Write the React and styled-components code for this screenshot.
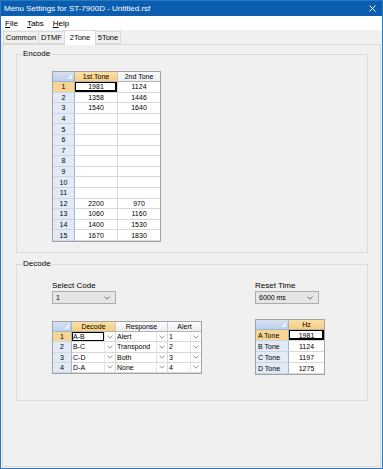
import React from 'react';
import styled, { createGlobalStyle, css } from 'styled-components';

const encodeRows = [
  ['1981', '1124'],
  ['1358', '1446'],
  ['1540', '1640'],
  ['', ''],
  ['', ''],
  ['', ''],
  ['', ''],
  ['', ''],
  ['', ''],
  ['', ''],
  ['', ''],
  ['2200', '970'],
  ['1060', '1160'],
  ['1400', '1530'],
  ['1670', '1830'],
];

const decodeRows = [
  ['A-B', 'Alert', '1'],
  ['B-C', 'Transpond', '2'],
  ['C-D', 'Both', '3'],
  ['D-A', 'None', '4'],
];

const hzRows = [
  ['A Tone', '1981'],
  ['B Tone', '1124'],
  ['C Tone', '1197'],
  ['D Tone', '1275'],
];

const GlobalStyle = createGlobalStyle`
  html, body {
    margin: 0;
    padding: 0;
    background: #fff;
  }
  body {
    font-family: "Liberation Sans", Arial, sans-serif;
    color: #000;
  }
`;

const Chevron = ({ color = '#606060' }) => (
  <svg width="6" height="4" viewBox="0 0 6 4">
    <polyline points="0.5,0.6 3,3.2 5.5,0.6" fill="none" stroke={color} strokeWidth="0.9" />
  </svg>
);

const App = () => {
  return (
    <>
      <GlobalStyle />
      <Window>
        <TitleBar>
          <span>Menu Settings for ST-7900D - Untitled.rsf</span>
          <svg width="7" height="7" viewBox="0 0 7 7">
            <path d="M0.5 0.5 L6.5 6.5 M6.5 0.5 L0.5 6.5" stroke="#fff" strokeWidth="1" />
          </svg>
        </TitleBar>
        <MenuBar>
          <MenuItem><u>F</u>ile</MenuItem>
          <MenuItem><u>T</u>abs</MenuItem>
          <MenuItem><u>H</u>elp</MenuItem>
        </MenuBar>
        <TabStrip>
          <Tab $w={36}>Common</Tab>
          <Tab $w={27}>DTMF</Tab>
          <Tab $w={32} $active>2Tone</Tab>
          <Tab $w={26}>5Tone</Tab>
        </TabStrip>
        <Panel>
          <Group>
            <Legend>Encode</Legend>
            <GroupBody $h={193}>
              <DataGrid $cols="22px 43px 42px" $rows="10px repeat(15, 10.6px)">
                <Corner />
                <ColHeader $selected>1st Tone</ColHeader>
                <ColHeader $last>2nd Tone</ColHeader>
                {encodeRows.map((row, i) => (
                  <React.Fragment key={i}>
                    <RowHeader $selected={i === 0}>{i + 1}</RowHeader>
                    <Cell $focus={i === 0}>{row[0]}</Cell>
                    <Cell $last>{row[1]}</Cell>
                  </React.Fragment>
                ))}
              </DataGrid>
            </GroupBody>
          </Group>

          <Group>
            <Legend>Decode</Legend>
            <GroupBody $h={131}>
              <DecodeLayout>
                <LeftColumn>
                  <FieldLabel>Select Code</FieldLabel>
                  <Dropdown>
                    <span>1</span>
                    <Chevron />
                  </Dropdown>
                  <DataGrid $top={17} $cols="19px 44px 52px 33px" $rows="10px repeat(4, 10.25px)">
                    <Corner />
                    <ColHeader $selected>Decode</ColHeader>
                    <ColHeader>Response</ColHeader>
                    <ColHeader $last>Alert</ColHeader>
                    {decodeRows.map((row, i) => (
                      <React.Fragment key={i}>
                        <RowHeader $selected={i === 0}>{i + 1}</RowHeader>
                        {row.map((value, j) => (
                          <ComboCell key={j} $last={j === row.length - 1}>
                            <ComboText $focus={i === 0 && j === 0}>{value}</ComboText>
                            <ComboButton>
                              <Chevron color="#8a8a8a" />
                            </ComboButton>
                          </ComboCell>
                        ))}
                      </React.Fragment>
                    ))}
                  </DataGrid>
                </LeftColumn>
                <RightColumn>
                  <FieldLabel>Reset Time</FieldLabel>
                  <Dropdown>
                    <span>6000 ms</span>
                    <Chevron />
                  </Dropdown>
                  <DataGrid $top={15} $cols="33px 35px" $rows="10px repeat(4, 11px)">
                    <Corner />
                    <ColHeader $selected $last>Hz</ColHeader>
                    {hzRows.map((row, i) => (
                      <React.Fragment key={i}>
                        <RowHeader $selected={i === 0} $left>{row[0]}</RowHeader>
                        <Cell $focus={i === 0} $last>{row[1]}</Cell>
                      </React.Fragment>
                    ))}
                  </DataGrid>
                </RightColumn>
              </DecodeLayout>
            </GroupBody>
          </Group>
        </Panel>
      </Window>
    </>
  );
};

const Window = styled.div`
  width: 383px;
  height: 469px;
  box-sizing: border-box;
  border: 1px solid #2a78c4;
  background: #f0f0f0;
  display: flex;
  flex-direction: column;
`;

const TitleBar = styled.div`
  height: 15px;
  flex-shrink: 0;
  background: #0b5db0;
  color: #fff;
  font-size: 8px;
  display: flex;
  align-items: center;
  justify-content: space-between;
  padding: 0 6px 0 3px;
`;

const MenuBar = styled.div`
  height: 14px;
  flex-shrink: 0;
  background: #fff;
  display: flex;
  align-items: center;
  font-size: 8px;
`;

const MenuItem = styled.span`
  padding: 0 4px;
  margin-right: 1px;
`;

const TabStrip = styled.div`
  height: 14px;
  flex-shrink: 0;
  display: flex;
  align-items: flex-end;
  padding-left: 2px;
`;

const Tab = styled.div`
  position: relative;
  box-sizing: border-box;
  width: ${p => p.$w}px;
  height: 13px;
  margin-right: -1px;
  border: 1px solid #d9d9d9;
  background: #f0f0f0;
  font-size: 7.5px;
  display: flex;
  align-items: center;
  justify-content: center;

  ${p => p.$active && css`
    height: 15px;
    margin-bottom: -1px;
    border-bottom: none;
    background: #fff;
    z-index: 1;
    padding-bottom: 2px;
  `}
`;

const Panel = styled.div`
  flex: 1;
  margin: 0 1px 1px;
  box-sizing: border-box;
  border: 1px solid #d9d9d9;
  background: #f0f0f0;
  padding: 4px 0 0 13px;
`;

const Group = styled.fieldset`
  margin: 0;
  padding: 0;
  min-width: 0;
  width: 352px;
  box-sizing: border-box;
  border: 1px solid #dcdcdc;

  & + & {
    margin-top: 6px;
  }
`;

const Legend = styled.legend`
  margin-left: 5px;
  padding: 0 1px;
  font-size: 8px;
  line-height: 10px;
`;

const GroupBody = styled.div`
  height: ${p => p.$h}px;
  box-sizing: border-box;
  padding: 12px 0 0 35px;
`;

const DataGrid = styled.div`
  display: grid;
  width: fit-content;
  grid-template-columns: ${p => p.$cols};
  grid-template-rows: ${p => p.$rows};
  margin-top: ${p => p.$top || 0}px;
  border: 1px solid #a3a3a3;
  background: #fff;
  font-size: 7px;
`;

const cellBase = css`
  box-sizing: border-box;
  display: flex;
  align-items: center;
  justify-content: center;
  overflow: hidden;
  white-space: nowrap;
  line-height: 1;
  border-right: ${p => (p.$last ? 'none' : '1px solid #d8d8d8')};
  border-bottom: 1px solid #d8d8d8;
`;

const Corner = styled.div`
  ${cellBase};
  position: relative;
  border-right: 1px solid #9eb6ce;
  border-bottom: 1px solid #9eb6ce;
  background: linear-gradient(#d3e1f3, #bdd1ec);

  &::after {
    content: '';
    position: absolute;
    right: 2px;
    bottom: 2px;
    border-left: 5px solid transparent;
    border-bottom: 5px solid #eef3fa;
  }
`;

const ColHeader = styled.div`
  ${cellBase};
  border-bottom: 1px solid #b5b5b5;
  border-right: ${p => (p.$last ? 'none' : '1px solid #c8c8c8')};
  background: ${p => (p.$selected
    ? 'linear-gradient(#fbe0a8, #f6cd7c)'
    : 'linear-gradient(#fbfbfc, #eceef1)')};
`;

const RowHeader = styled.div`
  ${cellBase};
  justify-content: ${p => (p.$left ? 'flex-start' : 'center')};
  padding-left: ${p => (p.$left ? '2px' : '0')};
  border-right: 1px solid #9eb6ce;
  border-bottom: 1px solid #c9d7ea;
  background: ${p => (p.$selected ? '#f8d594' : '#e2eaf6')};
`;

const Cell = styled.div`
  ${cellBase};
  background: #fff;
  ${p => p.$focus && css`
    box-shadow: inset 0 0 0 1px #000, inset -1px -1px 0 1px #000;
  `}
`;

const ComboCell = styled.div`
  ${cellBase};
  justify-content: stretch;
  align-items: stretch;
  background: #fff;
`;

const ComboText = styled.div`
  flex: 1;
  display: flex;
  align-items: center;
  padding-left: 1px;
  box-sizing: border-box;
  ${p => p.$focus && css`
    box-shadow: inset 0 0 0 1px #000;
  `}
`;

const ComboButton = styled.div`
  width: 11px;
  flex-shrink: 0;
  box-sizing: border-box;
  border-left: 1px solid #e4e4e4;
  display: flex;
  align-items: center;
  justify-content: center;
`;

const DecodeLayout = styled.div`
  display: flex;
`;

const LeftColumn = styled.div`
  width: 203px;
  display: flex;
  flex-direction: column;
`;

const RightColumn = styled.div`
  display: flex;
  flex-direction: column;
`;

const FieldLabel = styled.div`
  font-size: 8px;
  line-height: 10px;
`;

const Dropdown = styled.div`
  width: 64px;
  height: 13px;
  box-sizing: border-box;
  border: 1px solid #adadad;
  background: #e5e5e5;
  display: flex;
  align-items: center;
  justify-content: space-between;
  padding: 0 5px 0 3px;
  font-size: 7px;
`;

export default App;
